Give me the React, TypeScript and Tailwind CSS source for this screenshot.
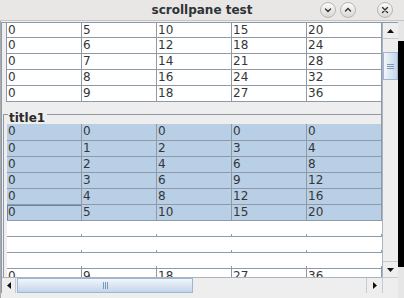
import React from "react";

const cols = [0, 1, 2, 3, 4];

function Row({ i, h, blue, focus }: { i: number; h: string; blue?: boolean; focus?: boolean }) {
  return (
    <div className={`flex shrink-0 ${h} ${blue ? "bg-[#b8cfe5]" : "bg-white"}`}>
      {cols.map((c) => (
        <div
          key={c}
          className={`w-[75px] shrink-0 overflow-hidden border-r border-b border-[#8e9aa8] pl-[1px] leading-[15px] ${
            focus && c === 0 ? "shadow-[inset_1px_1px_0_#6d849f]" : ""
          }`}
        >
          {i * c}
        </div>
      ))}
    </div>
  );
}

function TickRow() {
  return (
    <div className="flex h-[16px] shrink-0 bg-white">
      {cols.map((c) => (
        <div key={c} className="flex w-[75px] shrink-0 items-end justify-end border-b border-[#8e9aa8]">
          <div className="h-[2px] w-px bg-[#8e9aa8]" />
        </div>
      ))}
    </div>
  );
}

function WinBtn({ kind }: { kind: "down" | "up" | "close" }) {
  return (
    <div className="flex h-[16px] w-[16px] items-center justify-center rounded-full border border-[#b7b6b3] bg-linear-to-b from-[#fbfbfa] to-[#d9d8d6]">
      <svg width="8" height="8" viewBox="0 0 8 8" fill="none" stroke="#2e3436" strokeWidth="1.4" strokeLinecap="round">
        {kind === "down" && <path d="M1.5 3 L4 5.5 L6.5 3" />}
        {kind === "up" && <path d="M1.5 5 L4 2.5 L6.5 5" />}
        {kind === "close" && <path d="M1.5 1.5 L6.5 6.5 M6.5 1.5 L1.5 6.5" />}
      </svg>
    </div>
  );
}

function Arrow({ dir }: { dir: "up" | "down" | "left" | "right" }) {
  const d = {
    up: "M0 4 L3.5 0 L7 4 Z",
    down: "M0 0 L7 0 L3.5 4 Z",
    left: "M4 0 L4 7 L0 3.5 Z",
    right: "M0 0 L4 3.5 L0 7 Z",
  }[dir];
  const vertical = dir === "up" || dir === "down";
  return (
    <svg width={vertical ? 7 : 4} height={vertical ? 4 : 7} viewBox={vertical ? "0 0 7 4" : "0 0 4 7"}>
      <path d={d} fill="#111" />
    </svg>
  );
}

export default function App() {
  return (
    <div className="flex h-[298px] w-[404px] flex-col overflow-hidden bg-[#e8e7e6] font-['DejaVu_Sans',sans-serif] text-[12px] text-[#363636]">
      <div className="grid h-[21px] shrink-0 grid-cols-[1fr_auto_1fr] items-center border-b border-[#c6c5c2]">
        <div />
        <div className="font-bold leading-[15px] text-[#2e3436]">scrollpane test</div>
        <div className="flex items-center justify-end pr-[11px]">
          <WinBtn kind="down" />
          <div className="w-[4px]" />
          <WinBtn kind="up" />
          <div className="w-[21px]" />
          <WinBtn kind="close" />
        </div>
      </div>

      <div className="flex min-h-0 flex-1">
        <div className="flex w-[398px] flex-col border-l border-[#a9a9a9] bg-[#eeeeee] pt-[1px]">
          <div className="grid grid-cols-[380px_16px] grid-rows-[254px_16px] border-t border-l border-[#8e9aa8]">
            <div className="flex flex-col overflow-hidden bg-[#eeeeee]">
              <div className="shrink-0 pl-[4px]">
                <div className="border-l border-[#8e9aa8]">
                  <Row i={5} h="h-[15px]" />
                  <Row i={6} h="h-[16px]" />
                  <Row i={7} h="h-[16px]" />
                  <Row i={8} h="h-[16px]" />
                  <Row i={9} h="h-[16px]" />
                </div>
              </div>

              <div className="ml-[1px] flex shrink-0 flex-col">
                <div className="flex h-[22px] shrink-0 items-start border-r border-[#8e9aa8] pt-[9px]">
                  <div className="mt-[3px] h-[13px] w-[5px] border-t border-l border-[#8e9aa8]" />
                  <div className="pr-[2px] pl-[1px] font-bold leading-[14px] text-[#2a2a2a]">title1</div>
                  <div className="mt-[3px] h-px flex-1 bg-[#8e9aa8]" />
                </div>
                <div className="border-l border-[#8e9aa8] pl-[3px]">
                  <Row i={0} h="h-[17px]" blue />
                  <Row i={1} h="h-[16px]" blue />
                  <Row i={2} h="h-[16px]" blue />
                  <Row i={3} h="h-[16px]" blue />
                  <Row i={4} h="h-[16px]" blue />
                  <Row i={5} h="h-[16px]" blue focus />
                  <TickRow />
                  <TickRow />
                  <TickRow />
                  <Row i={9} h="h-[16px]" />
                </div>
              </div>
            </div>

            <div className="flex flex-col border-l border-[#a9b4c0] bg-[#eeeeee]">
              <div className="flex h-[16px] shrink-0 items-center justify-center border-b border-[#c3ccd6]">
                <Arrow dir="up" />
              </div>
              <div className="flex flex-1 flex-col">
                <div className="mt-[13px] flex h-[28px] flex-col items-center justify-center gap-[1px] border border-[#9fb6d2] bg-linear-to-r from-[#f2f6fb] to-[#c3d5ea]">
                  <div className="h-px w-[7px] bg-[#7e98b8]" />
                  <div className="h-px w-[7px] bg-[#7e98b8]" />
                  <div className="h-px w-[7px] bg-[#7e98b8]" />
                </div>
              </div>
              <div className="flex h-[16px] shrink-0 items-center justify-center border-t border-[#c3ccd6]">
                <Arrow dir="down" />
              </div>
            </div>

            <div className="flex border-t border-[#a9b4c0] bg-[#eeeeee]">
              <div className="flex w-[14px] shrink-0 items-center justify-center border-r border-[#c3ccd6]">
                <Arrow dir="left" />
              </div>
              <div className="ml-[1px] flex w-[176px] shrink-0 items-center justify-center gap-[1px] border border-[#9fb6d2] bg-linear-to-b from-[#f2f6fb] to-[#c3d5ea]">
                <div className="h-[7px] w-px bg-[#7e98b8]" />
                <div className="h-[7px] w-px bg-[#7e98b8]" />
                <div className="h-[7px] w-px bg-[#7e98b8]" />
              </div>
              <div className="flex-1" />
              <div className="flex w-[16px] shrink-0 items-center justify-center border-l border-[#c3ccd6]">
                <Arrow dir="right" />
              </div>
            </div>

            <div className="border-t border-l border-[#c3ccd6] bg-[#eeeeee]" />
          </div>
        </div>

        <div className="flex w-[6px] flex-col bg-[#e6e6e6]">
          <div className="h-[20px] shrink-0" />
          <div className="h-[226px] shrink-0 bg-black" />
        </div>
      </div>
    </div>
  );
}
